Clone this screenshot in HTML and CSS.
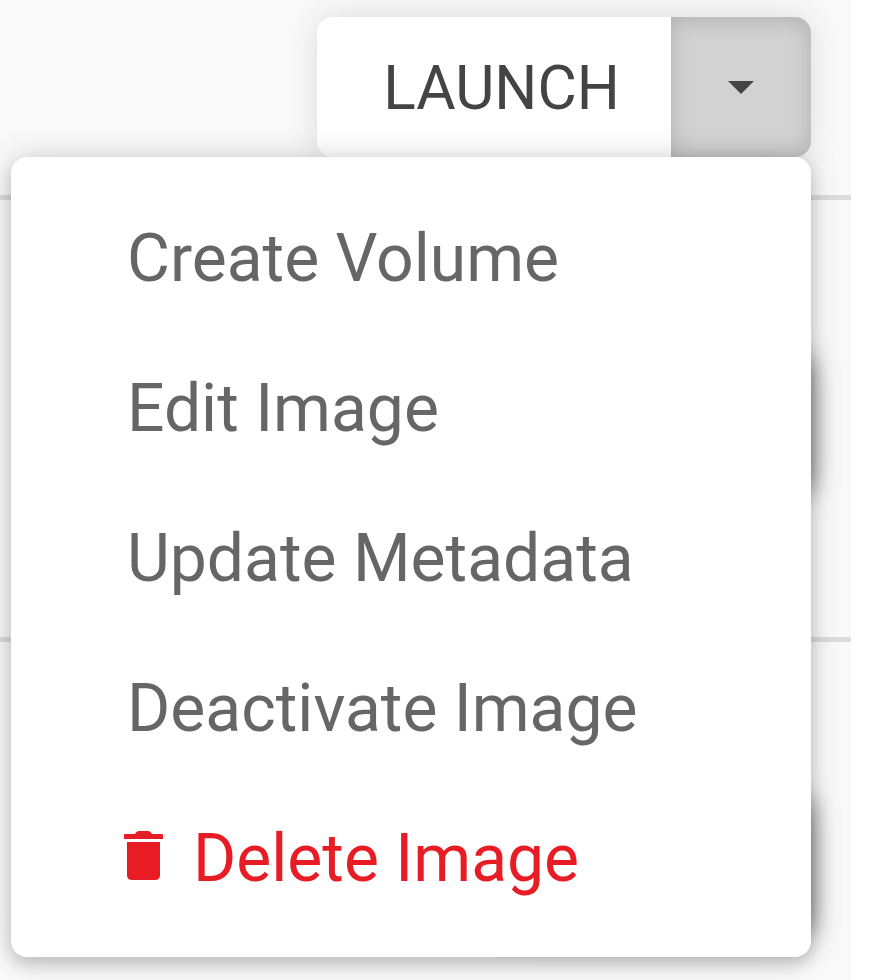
FILE: index.html
```html
<!DOCTYPE html>
<html lang="en">
<head>
    <meta charset="UTF-8">
    <title>Image actions</title>
    <link rel="stylesheet" href="styles.css">
</head>
<body>
    <div class="page">
        <div class="row row-first">
            <div class="launch-group">
                <button class="launch">LAUNCH</button>
                <button class="toggle"><span class="caret"></span></button>

                <ul class="menu">
                    <li class="menu-item">Create Volume</li>
                    <li class="menu-item">Edit Image</li>
                    <li class="menu-item">Update Metadata</li>
                    <li class="menu-item">Deactivate Image</li>
                    <li class="menu-item danger">
                        <svg class="trash" viewBox="0 0 39 49" aria-hidden="true">
                            <path d="M0 4 Q0 3 1 3 H11 L12.500 1 Q13.500 0 15 0 H24 Q25.500 0 26.500 1 L28 3 H38 Q39 3 39 4 V8 H0 Z"/>
                            <path d="M3 11 H36 V44 Q36 49 31 49 H8 Q3 49 3 44 Z"/>
                        </svg>
                        Delete Image
                    </li>
                </ul>
            </div>
        </div>
        <div class="row row-middle">
            <div class="hidden-btn"></div>
        </div>
        <div class="row row-last">
            <div class="hidden-btn"></div>
        </div>
    </div>
</body>
</html>
```

FILE: styles.css
```css
body {
    margin: 0;
    background: #ffffff;
    font-family: Roboto, "Liberation Sans", sans-serif;
}

.page {
    width: 851px;
    height: 980px;
    background: #f9f9f9;
    overflow: hidden;
}

.row {
    display: flex;
    justify-content: flex-end;
    padding-right: 40px;
    box-sizing: border-box;
    border-bottom: 5px solid #dcdcdc;
}

.row-first {
    height: 200px;
    padding-top: 17px;
}

.row-middle {
    height: 442px;
    padding-top: 155px;
}

.row-last {
    height: 338px;
    padding-top: 155px;
    border-bottom: none;
}

.launch-group {
    position: relative;
    display: flex;
    width: 494px;
    height: 140px;
    border-radius: 16px;
    box-shadow: 0 0 32px rgba(0, 0, 0, 0.12);
}

button {
    border: none;
    margin: 0;
    padding: 0;
    font-family: inherit;
}

.launch {
    width: 354px;
    padding-top: 2px;
    padding-left: 15px;
    background: #ffffff;
    border-radius: 16px 0 0 16px;
    color: #444444;
    font-size: 60.4px;
}

.toggle {
    display: flex;
    align-items: center;
    justify-content: center;
    width: 140px;
    background: #d2d2d2;
    border-radius: 0 16px 16px 0;
    box-shadow: inset 0 3px 22px rgba(0, 0, 0, 0.16);
}

.caret {
    width: 0;
    height: 0;
    border-top: 13px solid #444444;
    border-left: 13px solid transparent;
    border-right: 13px solid transparent;
}

.menu {
    position: absolute;
    top: 100%;
    right: 0;
    z-index: 2;
    width: 800px;
    height: 800px;
    margin: 0;
    padding: 26px 0 24px;
    box-sizing: border-box;
    list-style: none;
    background: #ffffff;
    border-radius: 16px;
    box-shadow: 0 8px 16px rgba(0, 0, 0, 0.16), 0 0 32px rgba(0, 0, 0, 0.16);
}

.menu-item {
    display: flex;
    align-items: center;
    height: 150px;
    padding-left: 116px;
    color: #666666;
    font-size: 66px;
}

.danger {
    padding-left: 113px;
    color: #e81c24;
}

.trash {
    width: 39px;
    height: 49px;
    margin-top: -6px;
    margin-right: 30px;
    fill: #e81c24;
}

.hidden-btn {
    width: 300px;
    height: 140px;
    border-radius: 16px;
    background: #ffffff;
    box-shadow: 0 0 26px rgba(0, 0, 0, 0.6);
}
```
